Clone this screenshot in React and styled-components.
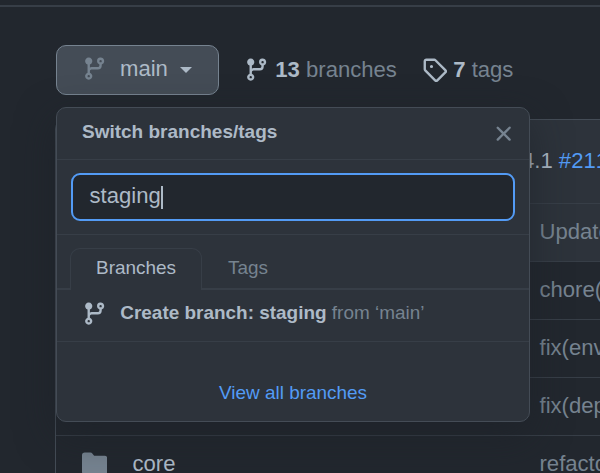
import React from "react";
import styled, { createGlobalStyle } from "styled-components";

const Global = createGlobalStyle`
  * { box-sizing: border-box; }
  body {
    margin: 0;
    background: #22272e;
    color: #adbac7;
    font: 22.1px/32px "Liberation Sans", Arial, sans-serif;
  }
`;

const Page = styled.main`
  position: relative;
  width: 600px;
  height: 468px;
  margin-top: 5px;
  overflow: hidden;
  border-top: 2px solid #373e47;
`;

const Toolbar = styled.div`
  display: flex;
  align-items: center;
  height: 50px;
  margin: 38px 0 0 56px;
`;

const BranchButton = styled.button`
  display: flex;
  align-items: center;
  width: 163px;
  height: 50px;
  padding: 0 0 3px 25px;
  border: 1px solid #768390;
  border-radius: 10px;
  background: #444c56;
  color: #adbac7;
  font: inherit;
`;

const Label = styled.span`
  margin-left: 12.7px;
`;

const Caret = styled.span`
  margin: 2px 0 0 12px;
  border: 6px solid transparent;
  border-top-color: #adbac7;
  border-bottom: 0;
`;

const Count = styled.a`
  display: flex;
  align-items: center;
  white-space: pre;
  color: #768390;
  margin-left: 25px;
  svg { margin-right: 6px; }
  strong { color: #adbac7; }
`;

const Icon = styled.svg`
  display: block;
  flex: none;
  width: 25.3px;
  height: 25.3px;
  fill: ${(p) => p.$color || "#adbac7"};
`;

const Files = styled.section`
  width: 800px;
  margin: 24px 0 0 55px;
  border: 1px solid #444c56;
  border-radius: 10px 10px 0 0;
  background: #22272e;
  overflow: hidden;
`;

const CommitBar = styled.div`
  height: 83px;
  padding: 25px 0 0 466px;
  background: #2d333b;
  white-space: pre;
  a { color: #539bf5; font-kerning: none; }
`;

const FileRow = styled.div`
  display: grid;
  grid-template-columns: 50.5px 407px 1fr;
  align-items: center;
  height: 58px;
  padding: 0 0 2px 26px;
  border-top: 1px solid #373e47;
  background: ${(p) => (p.$shaded ? "#2d333b" : "#22272e")};
  white-space: nowrap;
`;

const Message = styled.span`
  color: #768390;
`;

const Popup = styled.div`
  position: absolute;
  left: 56px;
  top: 100px;
  width: 474px;
  height: 315px;
  border: 1px solid #444c56;
  border-radius: 10px;
  background: #2d333b;
  box-shadow: 0 13px 38px #1c212899;
  font-size: 18.95px;
  line-height: 28px;
`;

const PopupHeader = styled.header`
  display: flex;
  justify-content: space-between;
  height: 52px;
  padding: 10px 13px 0 25px;
  border-bottom: 1px solid #373e47;
  font-size: 19px;
  font-weight: bold;
  svg { margin-top: 3px; }
`;

const SearchArea = styled.div`
  height: 75px;
  padding: 13px 14px;
  border-bottom: 1px solid #373e47;
`;

const SearchField = styled.div`
  display: flex;
  align-items: center;
  height: 48px;
  padding: 0 0 3px 16.5px;
  border: 2px solid #539bf5;
  border-radius: 9px;
  background: #22272e;
  font-size: 22.1px;
`;

const TextCursor = styled.span`
  width: 2px;
  height: 23px;
  margin-top: 4px;
  background: #adbac7;
`;

const Tabs = styled.div`
  display: flex;
  height: 55px;
  padding: 13px 0 0 13px;
  box-shadow: inset 0 -2px #373e47;
`;

const Tab = styled.div`
  height: 42px;
  padding: 5px 25px 0;
  border: 1px solid ${(p) => (p.$active ? "#373e47" : "transparent")};
  border-bottom: 0;
  border-radius: 10px 10px 0 0;
  background: ${(p) => (p.$active ? "#2d333b" : "transparent")};
  color: ${(p) => (p.$active ? "#adbac7" : "#768390")};
`;

const CreateRow = styled.div`
  display: flex;
  align-items: center;
  height: 52px;
  padding: 0 0 5px 25px;
  border-bottom: 1px solid #373e47;
  white-space: pre;
  color: #768390;
  svg { margin-top: 2px; }
  strong { color: #adbac7; margin-left: 13px; }
`;

const Footer = styled.footer`
  padding-top: 37px;
  text-align: center;
  color: #539bf5;
`;

const BranchIcon = ({ color }) => (
  <Icon viewBox="0 0 16 16" $color={color}>
    <path d="M11.75 2.5a.75.75 0 100 1.5.75.75 0 000-1.5zm-2.25.75a2.25 2.25 0 113 2.122V6A2.5 2.5 0 0110 8.5H6a1 1 0 00-1 1v1.128a2.251 2.251 0 11-1.5 0V5.372a2.25 2.25 0 111.5 0v1.836A2.492 2.492 0 016 7h4a1 1 0 001-1v-.628A2.25 2.25 0 019.5 3.25zM4.25 12a.75.75 0 100 1.5.75.75 0 000-1.5zM3.5 3.25a.75.75 0 111.5 0 .75.75 0 01-1.5 0z" />
  </Icon>
);

const TagIcon = () => (
  <Icon viewBox="0 0 16 16">
    <path fillRule="evenodd" d="M2.5 7.775V2.75a.25.25 0 01.25-.25h5.025a.25.25 0 01.177.073l6.25 6.25a.25.25 0 010 .354l-5.025 5.025a.25.25 0 01-.354 0l-6.25-6.25a.25.25 0 01-.073-.177zm-1.5 0V2.75C1 1.784 1.784 1 2.75 1h5.025c.464 0 .91.184 1.238.513l6.25 6.25a1.75 1.75 0 010 2.474l-5.026 5.026a1.75 1.75 0 01-2.474 0l-6.25-6.25A1.75 1.75 0 011 7.775zM6 5a1 1 0 100 2 1 1 0 000-2z" />
  </Icon>
);

const CloseIcon = () => (
  <Icon viewBox="0 0 16 16" $color="#768390">
    <path d="M3.72 3.72a.75.75 0 011.06 0L8 6.94l3.22-3.22a.75.75 0 111.06 1.06L9.06 8l3.22 3.22a.75.75 0 11-1.06 1.06L8 9.06l-3.22 3.22a.75.75 0 01-1.06-1.06L6.94 8 3.72 4.78a.75.75 0 010-1.06z" />
  </Icon>
);

const FolderIcon = () => (
  <Icon viewBox="0 0 16 16" $color="#768390">
    <path d="M1.75 1A1.75 1.75 0 000 2.75v10.5C0 14.216.784 15 1.75 15h12.5A1.75 1.75 0 0016 13.25v-8.5A1.75 1.75 0 0014.25 3h-6.5a.25.25 0 01-.2-.1l-.9-1.2c-.33-.44-.85-.7-1.4-.7h-3.5z" />
  </Icon>
);

const files = [
  { message: "Update", shaded: true },
  { message: "chore(" },
  { message: "fix(env" },
  { message: "fix(dep" },
  { name: "core", message: "refactor" },
];

export default function App() {
  return (
    <>
      <Global />
      <Page>
        <Toolbar>
          <BranchButton>
            <BranchIcon color="#768390" />
            <Label>main</Label>
            <Caret />
          </BranchButton>
          <Count>
            <BranchIcon />
            <strong>13</strong> branches
          </Count>
          <Count>
            <TagIcon />
            <strong>7</strong> tags
          </Count>
        </Toolbar>
        <Files>
          <CommitBar>4.1 <a>#211</a></CommitBar>
          {files.map((f) => (
            <FileRow key={f.message} $shaded={f.shaded}>
              {f.name ? <FolderIcon /> : <span />}
              <span>{f.name}</span>
              <Message>{f.message}</Message>
            </FileRow>
          ))}
        </Files>
        <Popup>
          <PopupHeader>
            Switch branches/tags
            <CloseIcon />
          </PopupHeader>
          <SearchArea>
            <SearchField>
              staging
              <TextCursor />
            </SearchField>
          </SearchArea>
          <Tabs>
            <Tab $active>Branches</Tab>
            <Tab>Tags</Tab>
          </Tabs>
          <CreateRow>
            <BranchIcon />
            <strong>Create branch: staging</strong> from ‘main’
          </CreateRow>
          <Footer>View all branches</Footer>
        </Popup>
      </Page>
    </>
  );
}
